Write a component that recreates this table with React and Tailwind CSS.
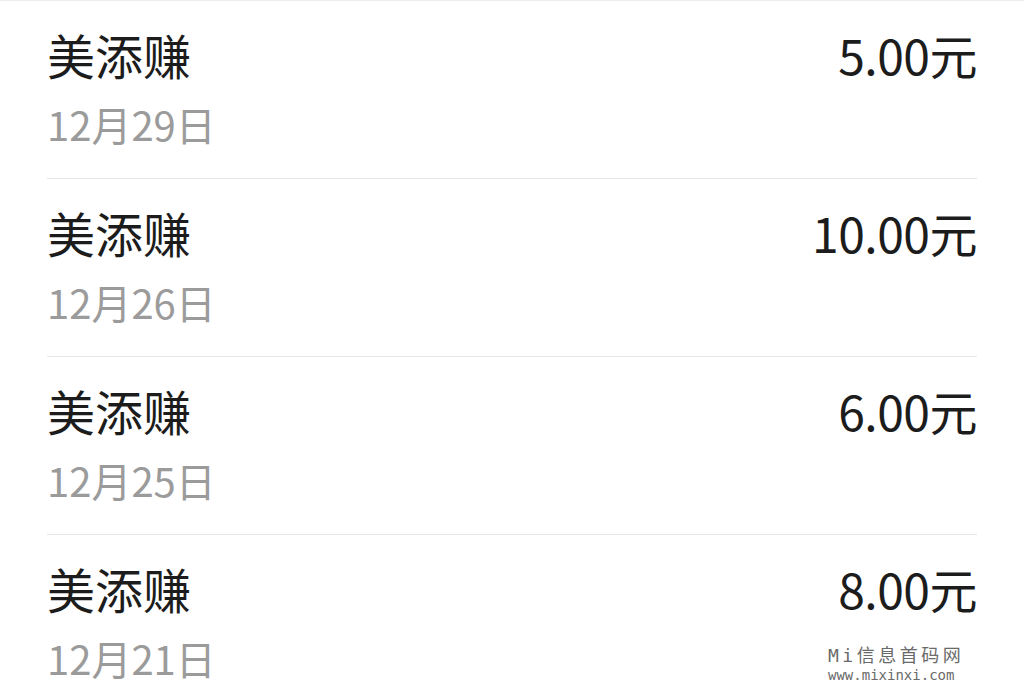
import React from 'react';

const records = [
  { name: '美添赚', date: '12月29日', amount: '5.00元' },
  { name: '美添赚', date: '12月26日', amount: '10.00元' },
  { name: '美添赚', date: '12月25日', amount: '6.00元' },
  { name: '美添赚', date: '12月21日', amount: '8.00元' },
];

function App() {
  return (
    <div
      className="relative w-[1024px] h-[697px] overflow-hidden bg-white"
      style={{ fontFamily: '"Noto Sans CJK SC", "Noto Sans", sans-serif' }}
    >
      <div className="h-px bg-[#ececec]" />

      {records.map((item, i) => (
        <div key={i} className="mx-[47px] h-[177px] border-b border-[#e6e6e6] flex flex-col box-content">
          <div className="flex items-center justify-between pt-[29px]">
            <span className="text-[48px] leading-[48px] text-[#1c1c1c]">{item.name}</span>
            <span className="text-[48px] leading-[48px] text-[#1c1c1c] tracking-[-0.5px]">{item.amount}</span>
          </div>
          <div className="mt-[26px] text-[40px] leading-[40px] text-[#9b9b9b]">{item.date}</div>
        </div>
      ))}

      {/* watermark */}
      <div className="absolute left-[828px] top-[647px] text-[#6a6a6a] leading-none">
        <div className="text-[18px] tracking-[3.5px]" style={{ fontFamily: '"DejaVu Sans Mono", "Noto Sans CJK SC", monospace' }}>
          Mi信息首码网
        </div>
        <div className="mt-[3px] text-[14px]" style={{ fontFamily: '"DejaVu Sans Mono", monospace' }}>
          www.mixinxi.com
        </div>
      </div>
    </div>
  );
}

export default App;
